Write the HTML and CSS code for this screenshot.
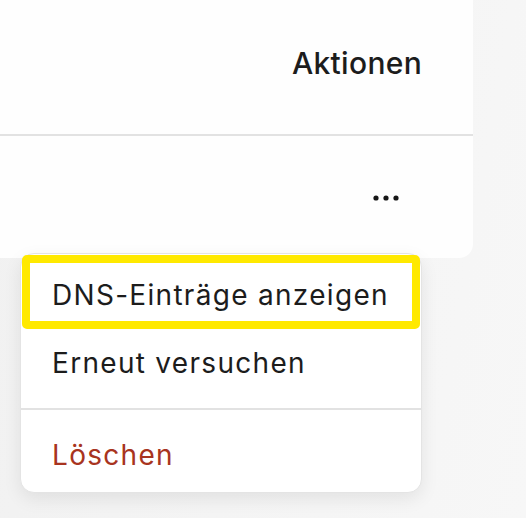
FILE: index.html
```html
<!DOCTYPE html>
<html lang="de">
<head>
    <meta charset="UTF-8">
    <meta name="viewport" content="width=device-width, initial-scale=1.0">
    <title>Domains</title>
    <link rel="stylesheet" href="styles.css">
</head>
<body>
    <div class="card">
        <div class="head">
            <span class="head-title">Aktionen</span>
        </div>
        <div class="row">
            <button class="more" aria-label="Mehr">
                <svg width="28" height="8" viewBox="0 0 28 8">
                    <circle cx="4" cy="4" r="2.6" fill="#161616"/>
                    <circle cx="14" cy="4" r="2.6" fill="#161616"/>
                    <circle cx="24" cy="4" r="2.6" fill="#161616"/>
                </svg>
            </button>
        </div>
    </div>

    <div class="menu">
        <div class="menu-item first">DNS-Einträge anzeigen</div>
        <div class="menu-item second">Erneut versuchen</div>
        <div class="menu-sep"></div>
        <div class="menu-item danger">Löschen</div>
    </div>
</body>
</html>
```

FILE: styles.css
```css
body {
    margin: 0;
    background: linear-gradient(100deg, #f1f1f1, #f7f7f7);
    font-family: Inter, "Noto Sans", sans-serif;
    color: #1c1c1c;
    height: 518px;
    overflow: hidden;
}
.card {
    width: 473px;
    height: 258px;
    background-color: #fefefe;
    border-bottom-right-radius: 14px;
}
.head {
    height: 136px;
    display: flex;
    justify-content: flex-end;
    padding-right: 51px;
    border-bottom: 2px solid #e2e2e2;
    box-sizing: border-box;
}
.head-title {
    font-size: 30px;
    font-weight: 500;
    letter-spacing: 0.3px;
    margin-top: 44px;
    line-height: 38px;
}
.row {
    height: 122px;
    display: flex;
    justify-content: flex-end;
    padding-right: 73px;
}
.more {
    border: none;
    background: none;
    padding: 0;
    margin-top: 58px;
    height: 8px;
    display: flex;
}
.menu {
    position: absolute;
    left: 20px;
    top: 253px;
    width: 402px;
    height: 240px;
    box-sizing: border-box;
    background: #fff;
    border: 1px solid #e4e4e4;
    border-radius: 14px;
    box-shadow: 0 6px 18px rgba(0, 0, 0, 0.08);
}
.menu-item {
    font-size: 28px;
    line-height: 32px;
    letter-spacing: 1.3px;
    padding-left: 31px;
}
.first {
    margin: 1px 1px 0 1px;
    border: 8px solid #ffe900;
    border-radius: 5px;
    padding: 16px 0 10px 22px;
}
.second {
    padding-top: 18px;
    padding-bottom: 29px;
}
.menu-sep {
    height: 2px;
    background: #e2e2e2;
}
.danger {
    color: #a83420;
    padding-top: 29px;
}
```
